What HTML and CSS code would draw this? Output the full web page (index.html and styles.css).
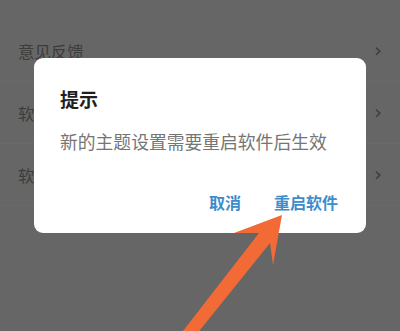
FILE: index.html
```html
<!DOCTYPE html>
<html lang="zh">
<head>
<meta charset="utf-8">
<link rel="stylesheet" href="styles.css">
</head>
<body>
<div class="page">
  <ul class="list">
    <li class="row"><span class="label">意见反馈</span><span class="chev">&#x203A;</span></li>
    <li class="row"><span class="label">软件设置</span><span class="chev">&#x203A;</span></li>
    <li class="row"><span class="label">软件更新</span><span class="chev">&#x203A;</span></li>
  </ul>
  <div class="dialog">
    <div class="title">提示</div>
    <div class="msg">新的主题设置需要重启软件后生效</div>
    <div class="actions">
      <span class="btn">取消</span>
      <span class="btn">重启软件</span>
    </div>
  </div>
  <svg class="arrow" width="400" height="331" viewBox="0 0 400 331">
    <polygon points="282,215 234,233 259,233 176,340 192,340 270,243 273,265" fill="#f26a36"/>
  </svg>
</div>
</body>
</html>
```

FILE: styles.css
```css
html, body {
  margin: 0;
  padding: 0;
}
body {
  background: #666666;
  font-family: "Noto Sans CJK SC", "Noto Sans", sans-serif;
}
.page {
  position: relative;
  width: 400px;
  height: 331px;
  overflow: hidden;
  background: #666666;
}
.list {
  list-style: none;
  margin: 0;
  padding: 20px 0 0 0;
}
.row {
  height: 62px;
  display: flex;
  align-items: center;
  justify-content: space-between;
  padding: 0 18px 0 18px;
  border-bottom: 1px solid #696969;
  box-sizing: border-box;
}
.label {
  font-size: 16.4px;
  color: #3c3c3c;
  line-height: 22px;
}
.chev {
  font-family: "DejaVu Sans", sans-serif;
  font-size: 20px;
  color: #3e3e3e;
  line-height: 20px;
  margin-top: -2px;
}
.dialog {
  position: absolute;
  left: 34px;
  top: 58px;
  width: 332px;
  height: 175px;
  background: #ffffff;
  border-radius: 9px;
  box-sizing: border-box;
  padding: 28px 28px 0 26px;
  display: flex;
  flex-direction: column;
}
.title {
  font-size: 19px;
  font-weight: bold;
  color: #1f1f1f;
  line-height: 26px;
}
.msg {
  margin-top: 17px;
  font-size: 17.8px;
  color: #757575;
  line-height: 24px;
  white-space: nowrap;
}
.actions {
  margin-top: 38px;
  display: flex;
  justify-content: flex-end;
  gap: 33px;
}
.btn {
  font-size: 16px;
  font-weight: bold;
  color: #3d8ccb;
  line-height: 22px;
}
.arrow {
  position: absolute;
  left: 0;
  top: 0;
}
```
